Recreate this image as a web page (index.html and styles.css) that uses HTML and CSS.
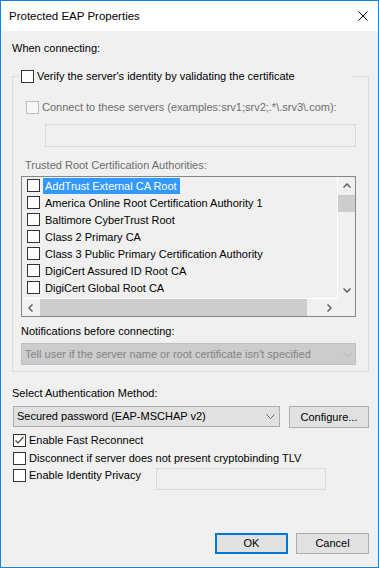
FILE: index.html
```html
<!DOCTYPE html>
<html lang="en">
<head>
  <meta charset="UTF-8" />
  <title>Protected EAP Properties</title>
  <link rel="stylesheet" href="styles.css">
</head>
<body>

  <div class="window">
    <div class="titlebar">
      <span class="title">Protected EAP Properties</span>
      <svg class="close" width="10" height="10" viewBox="0 0 10 10">
        <path d="M0.5 0.5 L9.5 9.5 M9.5 0.5 L0.5 9.5" stroke="#000" stroke-width="1" fill="none" />
      </svg>
    </div>

    <div class="content">
      <div class="label">When connecting:</div>

      <fieldset class="group">
        <legend class="group-title">
          <span class="check"></span>
          <span class="check-text">Verify the server's identity by validating the certificate</span>
        </legend>

        <div class="check-row servers disabled">
          <span class="check"></span>
          <span class="check-text">Connect to these servers (examples:srv1;srv2;.*\.srv3\.com):</span>
        </div>
        <div class="textbox servers-box"></div>

        <div class="label trusted disabled">Trusted Root Certification Authorities:</div>
        <div class="listbox">
          <div class="list-items">
            <div class="list-item"><span class="check"></span><span class="item-text selected">AddTrust External CA Root</span></div>
            <div class="list-item"><span class="check"></span><span class="item-text">America Online Root Certification Authority 1</span></div>
            <div class="list-item"><span class="check"></span><span class="item-text">Baltimore CyberTrust Root</span></div>
            <div class="list-item"><span class="check"></span><span class="item-text">Class 2 Primary CA</span></div>
            <div class="list-item"><span class="check"></span><span class="item-text">Class 3 Public Primary Certification Authority</span></div>
            <div class="list-item"><span class="check"></span><span class="item-text">DigiCert Assured ID Root CA</span></div>
            <div class="list-item"><span class="check"></span><span class="item-text">DigiCert Global Root CA</span></div>
          </div>
          <div class="vscroll">
            <div class="scroll-btn">
              <svg width="8" height="5" viewBox="0 0 8 5"><polyline points="0.5,4.5 4,1 7.5,4.5" fill="none" stroke="#606060" stroke-width="1.5" /></svg>
            </div>
            <div class="vthumb"></div>
            <div class="spacer"></div>
            <div class="scroll-btn">
              <svg width="8" height="5" viewBox="0 0 8 5"><polyline points="0.5,0.5 4,4 7.5,0.5" fill="none" stroke="#606060" stroke-width="1.5" /></svg>
            </div>
          </div>
          <div class="hscroll">
            <div class="scroll-btn">
              <svg width="5" height="8" viewBox="0 0 5 8"><polyline points="4.5,0.5 1,4 4.5,7.5" fill="none" stroke="#606060" stroke-width="1.5" /></svg>
            </div>
            <div class="hthumb"></div>
            <div class="spacer"></div>
            <div class="scroll-btn">
              <svg width="5" height="8" viewBox="0 0 5 8"><polyline points="0.5,0.5 4,4 0.5,7.5" fill="none" stroke="#606060" stroke-width="1.5" /></svg>
            </div>
          </div>
          <div class="corner"></div>
        </div>

        <div class="label notify">Notifications before connecting:</div>
        <div class="combo combo-disabled">
          <span>Tell user if the server name or root certificate isn't specified</span>
          <svg width="9" height="5" viewBox="0 0 9 5"><polyline points="0.5,0.5 4.5,4.5 8.5,0.5" fill="none" stroke="#b4b4b4" stroke-width="1" /></svg>
        </div>
      </fieldset>

      <div class="label auth">Select Authentication Method:</div>
      <div class="auth-row">
        <div class="combo method">
          <span>Secured password (EAP-MSCHAP v2)</span>
          <svg width="9" height="5" viewBox="0 0 9 5"><polyline points="0.5,0.5 4.5,4.5 8.5,0.5" fill="none" stroke="#606060" stroke-width="1" /></svg>
        </div>
        <button class="button configure">Configure...</button>
      </div>

      <div class="check-row fast">
        <span class="check">
          <svg width="11" height="11" viewBox="0 0 11 11"><polyline points="1.5,5.5 4,8 9.5,2" fill="none" stroke="#444" stroke-width="1.2" /></svg>
        </span>
        <span class="check-text">Enable Fast Reconnect</span>
      </div>
      <div class="check-row binding">
        <span class="check"></span>
        <span class="check-text">Disconnect if server does not present cryptobinding TLV</span>
      </div>
      <div class="privacy-row">
        <div class="check-row privacy">
          <span class="check"></span>
          <span class="check-text">Enable Identity Privacy</span>
        </div>
        <div class="textbox identity-box"></div>
      </div>

      <div class="footer">
        <button class="button default">OK</button>
        <button class="button">Cancel</button>
      </div>
    </div>
  </div>

</body>
</html>
```

FILE: styles.css
```css
body {
  margin: 0;
  font-family: "Liberation Sans", Arial, sans-serif;
  font-size: 11px;
  line-height: 13px;
  color: #000;
  background-color: #fff;
}

.window {
  width: 379px;
  height: 568px;
  box-sizing: border-box;
  border: 1px solid #1883d7;
  background-color: #f0f0f0;
  display: flex;
  flex-direction: column;
}

.titlebar {
  flex: none;
  height: 30px;
  background-color: #fff;
  display: flex;
  align-items: center;
  justify-content: space-between;
  padding: 0 10px 0 8px;
}

.title {
  font-size: 11.5px;
}

.close {
  display: block;
}

.content {
  flex: 1;
  display: flex;
  flex-direction: column;
  padding: 11px 9px 13px 11px;
}

.label {
  white-space: nowrap;
}

.disabled {
  color: #6d6d6d;
}

/* checkboxes */
.check {
  flex: none;
  width: 13px;
  height: 13px;
  box-sizing: border-box;
  border: 1px solid #333;
  background-color: #fff;
  display: flex;
  align-items: center;
  justify-content: center;
}

.disabled .check {
  border-color: #bcbcbc;
  background-color: #f7f7f7;
}

.check-row {
  display: flex;
  align-items: center;
  height: 13px;
}

.check-text {
  margin-left: 3px;
  white-space: nowrap;
}

/* group box */
.group {
  margin: 15px 0 0;
  padding: 0 11px 6px 8px;
  border: 1px solid #dcdcdc;
  min-width: 0;
}

.group-title {
  margin-left: -2px;
  padding: 0 0 0 2px;
  width: 332px;
  height: 13px;
  box-sizing: border-box;
  display: flex;
  align-items: center;
}

.servers {
  margin: 18px 0 0 5px;
}

.textbox {
  box-sizing: border-box;
  border: 1px solid #d9d9d9;
  background-color: #f0f0f0;
}

.servers-box {
  margin: 10px 0 0 24px;
  width: 311px;
  height: 23px;
}

.trusted {
  margin: 12px 0 0 4px;
}

/* certificate list */
.listbox {
  margin-top: 4px;
  width: 335px;
  height: 141px;
  box-sizing: border-box;
  border: 1px solid #828790;
  display: grid;
  grid-template-columns: 316px 17px;
  grid-template-rows: 122px 17px;
}

.list-items {
  border-right: 1px solid #fff;
  border-bottom: 1px solid #fff;
  overflow: hidden;
}

.list-item {
  display: flex;
  align-items: center;
  height: 17px;
  padding-left: 5px;
}

.item-text {
  margin-left: 3px;
  padding: 0 3px 0 2px;
  line-height: 16px;
  white-space: nowrap;
}

.selected {
  background-color: #3399ff;
  color: #fff;
}

.vscroll {
  display: flex;
  flex-direction: column;
}

.hscroll {
  display: flex;
}

.scroll-btn {
  flex: none;
  width: 17px;
  height: 17px;
  display: flex;
  align-items: center;
  justify-content: center;
}

.vthumb {
  flex: none;
  height: 17px;
  margin-top: 1px;
  background-color: #cdcdcd;
}

.hthumb {
  flex: none;
  width: 267px;
  margin-left: 1px;
  background-color: #cdcdcd;
}

.spacer {
  flex: 1;
}

.notify {
  margin-top: 8px;
}

/* combo boxes */
.combo {
  box-sizing: border-box;
  border: 1px solid #adadad;
  background-color: #e1e1e1;
  display: flex;
  align-items: center;
  justify-content: space-between;
  white-space: nowrap;
}

.combo svg {
  display: block;
}

.combo-disabled {
  margin-top: 5px;
  width: 335px;
  height: 22px;
  padding: 0 3px 0 3px;
  border-color: #bfbfbf;
  background-color: #cccccc;
  color: #838383;
}

.auth {
  margin-top: 15px;
}

.auth-row {
  display: flex;
  align-items: flex-start;
  margin: 6px 0 0 1px;
}

.method {
  width: 267px;
  height: 21px;
  padding: 0 4px 0 3px;
}

/* buttons */
.button {
  box-sizing: border-box;
  border: 1px solid #adadad;
  background-color: #e1e1e1;
  font: inherit;
  color: #000;
  padding: 0;
  display: flex;
  align-items: center;
  justify-content: center;
}

.configure {
  margin-left: 9px;
  width: 80px;
  height: 22px;
}

.fast {
  margin: 6px 0 0 1px;
}

.binding {
  margin: 5px 0 0 1px;
}

.privacy-row {
  display: flex;
  align-items: flex-start;
  margin: 3px 0 0 1px;
}

.privacy {
  margin-top: 1px;
  width: 143px;
}

.identity-box {
  width: 170px;
  height: 22px;
}

.footer {
  margin-top: auto;
  display: flex;
  justify-content: flex-end;
  gap: 8px;
}

.footer .button {
  width: 73px;
  height: 21px;
}

.default {
  border: 2px solid #0078d7;
}
```
